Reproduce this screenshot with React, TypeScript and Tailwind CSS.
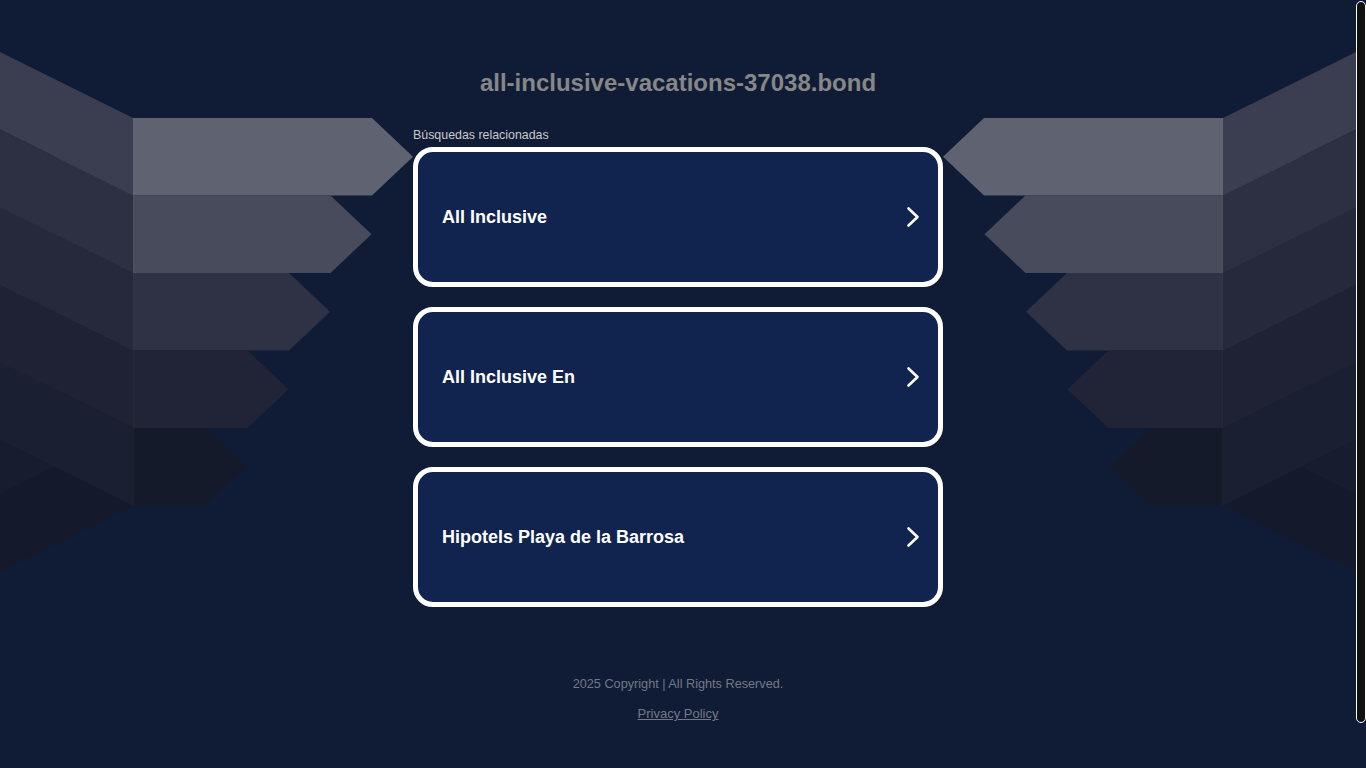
import React from "react";

const ROW_H = 77.5;
const ARROW = ["#5f6271", "#484b5b", "#2e3244", "#202436", "#151a2b"];
const ACOL = ["#3a3e50", "#2c3042", "#25293b", "#1e2234", "#1b1f32"];
const BCOL = ["#3a3e50", "#2c3042", "#25293b", "#181c2f", "#141a2c"];

function Wing() {
  const parts: React.ReactNode[] = [];
  for (let i = 4; i >= 0; i--) {
    const y = 118 + ROW_H * i;
    const yb = y + ROW_H;
    parts.push(
      <polygon
        key={"b" + i}
        points={`0,${y + 66} 133,${y} 133,${yb} 0,${yb + 66}`}
        fill={BCOL[i]}
      />
    );
  }
  for (let i = 0; i < 5; i++) {
    const y = 118 + ROW_H * i;
    const yb = y + ROW_H;
    parts.push(
      <polygon
        key={"a" + i}
        points={`0,${y - 66} 133,${y} 133,${yb} 0,${yb - 66}`}
        fill={ACOL[i]}
      />
    );
  }
  for (let i = 0; i < 5; i++) {
    const y = 118 + ROW_H * i;
    const yb = y + ROW_H;
    const tip = 413 - 41.5 * i;
    const end = tip - 41;
    parts.push(
      <polygon
        key={"r" + i}
        points={`133,${y} ${end},${y} ${tip},${y + ROW_H / 2} ${end},${yb} 133,${yb}`}
        fill={ARROW[i]}
      />
    );
    parts.push(
      <rect key={"e" + i} x={133} y={y} width={1.5} height={ROW_H} fill="#ffffff" fillOpacity={0.025} />
    );
  }
  return <g>{parts}</g>;
}

function Wings() {
  return (
    <svg
      className="absolute left-0 top-0 pointer-events-none"
      width="1356"
      height="620"
      viewBox="0 0 1356 620"
      aria-hidden="true"
    >
      <Wing />
      <g transform="translate(1356,0) scale(-1,1)">
        <Wing />
      </g>
    </svg>
  );
}

function Chevron() {
  return (
    <svg width="16" height="22" viewBox="0 0 16 22" fill="none" aria-hidden="true">
      <path
        d="M3.5 2.5 L12.5 11 L3.5 19.5"
        stroke="#ffffff"
        strokeWidth="2.6"
        strokeLinecap="round"
        strokeLinejoin="round"
      />
    </svg>
  );
}

function Card({ label }: { label: string }) {
  return (
    <a
      href="#"
      className="flex h-[140px] w-[530px] items-center justify-between rounded-[20px] border-[5px] border-white bg-[#11244f] pl-[24px] pr-[17px]"
    >
      <span className="text-[18px] font-bold leading-[22px] text-white">{label}</span>
      <Chevron />
    </a>
  );
}

export default function App() {
  return (
    <div
      className="flex h-screen overflow-hidden bg-[#101c36]"
      style={{ fontFamily: '"Liberation Sans", Arial, sans-serif' }}
    >
      <div className="relative h-full w-[1356px] shrink-0 bg-[#101c36]">
        <Wings />
        <div className="relative flex flex-col items-center">
          <h1 className="pt-[69px] text-[24px] font-bold leading-[28px] text-[#878787]">
            all-inclusive-vacations-37038.bond
          </h1>
          <div className="mt-[30px] w-[530px]">
            <div className="text-[12.4px] leading-[16px] text-[#c9c9c9]">Búsquedas relacionadas</div>
            <div className="mt-[4px] flex flex-col gap-[20px]">
              <Card label="All Inclusive" />
              <Card label="All Inclusive En" />
              <Card label="Hipotels Playa de la Barrosa" />
            </div>
          </div>
          <div className="mt-[69px] text-[12.7px] leading-[16px] text-[#737887]">
            2025 Copyright | All Rights Reserved.
          </div>
          <a href="#" className="mt-[14px] text-[13px] leading-[16px] text-[#737887] underline">
            Privacy Policy
          </a>
        </div>
      </div>
      <div className="flex h-full w-[10px] flex-col bg-[#101c36] pt-[1px]">
        <div className="h-[722px] w-[10px] rounded-full border border-white bg-[#111111]" />
      </div>
    </div>
  );
}
